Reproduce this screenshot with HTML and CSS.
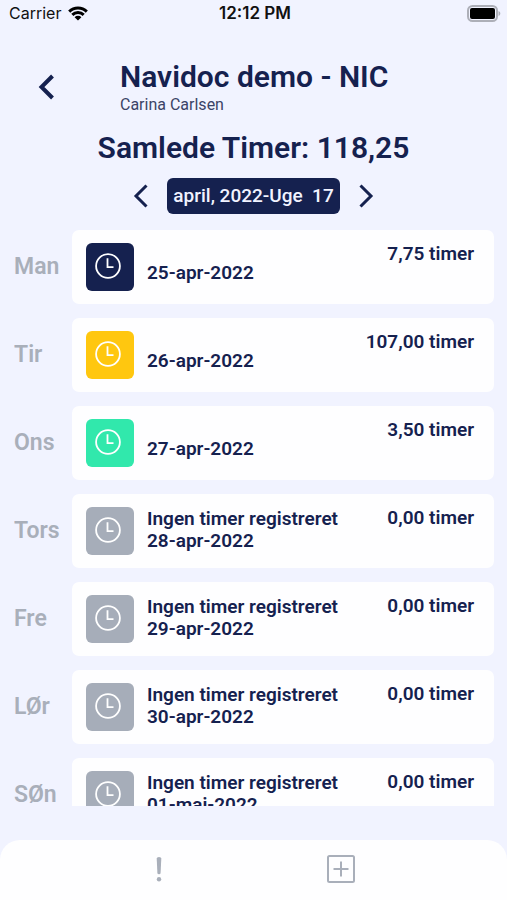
FILE: index.html
```html
<!DOCTYPE html>
<html lang="da">
<head>
<meta charset="utf-8">
<meta name="viewport" content="width=device-width, initial-scale=1">
<title>Navidoc demo - NIC</title>
<link rel="stylesheet" href="styles.css">
</head>
<body>
<svg class="sprite" aria-hidden="true">
  <symbol id="clock" viewBox="0 0 26 26">
    <circle cx="13" cy="13" r="11.9"/>
    <path d="M12.500 5.200V14.200h6"/>
  </symbol>
</svg>

<div class="status">
  <div class="carrier">
    <span>Carrier</span>
    <svg class="wifi" viewBox="0 0 20 15" aria-hidden="true">
      <path d="M1.2 5.6a12.6 12.6 0 0 1 17.6 0M4.3 8.9a8.2 8.2 0 0 1 11.4 0"/>
      <path class="solid" d="M10 14.6 6.6 11.2a4.8 4.8 0 0 1 6.8 0z"/>
    </svg>
  </div>
  <time class="clock-time">12:12 PM</time>
  <div class="power">
    <svg class="battery" viewBox="0 0 34 17" aria-hidden="true">
      <rect class="shell" x="1" y="1" width="29" height="15" rx="4.5"/>
      <rect class="charge" x="3" y="3" width="25" height="11" rx="2"/>
      <path class="tip" d="M31.5 6c2.400 1 2.400 4 0 5z"/>
    </svg>
  </div>
</div>

<header class="header">
  <button class="icon-button back" type="button" aria-label="Tilbage">
    <svg class="chevron-large" viewBox="0 0 16 26" aria-hidden="true"><path d="M13.500 2 2.500 13l11 11"/></svg>
  </button>
  <div>
    <h1 class="title">Navidoc demo - NIC</h1>
    <p class="user">Carina Carlsen</p>
  </div>
</header>

<h2 class="total">Samlede Timer: 118,25</h2>

<div class="week">
  <button class="icon-button" type="button" aria-label="Forrige uge">
    <svg class="chevron" viewBox="0 0 16 24" aria-hidden="true"><path d="M13.500 1.500 3 12l10.500 10.500"/></svg>
  </button>
  <button class="week-label" type="button">april, 2022-Uge&nbsp; 17</button>
  <button class="icon-button" type="button" aria-label="Næste uge">
    <svg class="chevron" viewBox="0 0 16 24" aria-hidden="true"><path d="M2.500 1.500 13 12 2.500 22.500"/></svg>
  </button>
</div>

<main class="days">
  <section class="day">
    <h3 class="weekday">Man</h3>
    <div class="card">
      <span class="badge navy"><svg><use href="#clock"/></svg></span>
      <div class="entry"><p class="note"></p><p>25-apr-2022</p></div>
      <p class="hours">7,75 timer</p>
    </div>
  </section>
  <section class="day">
    <h3 class="weekday">Tir</h3>
    <div class="card">
      <span class="badge yellow"><svg><use href="#clock"/></svg></span>
      <div class="entry"><p class="note"></p><p>26-apr-2022</p></div>
      <p class="hours">107,00 timer</p>
    </div>
  </section>
  <section class="day">
    <h3 class="weekday">Ons</h3>
    <div class="card">
      <span class="badge green"><svg><use href="#clock"/></svg></span>
      <div class="entry"><p class="note"></p><p>27-apr-2022</p></div>
      <p class="hours">3,50 timer</p>
    </div>
  </section>
  <section class="day">
    <h3 class="weekday">Tors</h3>
    <div class="card">
      <span class="badge"><svg><use href="#clock"/></svg></span>
      <div class="entry"><p class="note">Ingen timer registreret</p><p>28-apr-2022</p></div>
      <p class="hours">0,00 timer</p>
    </div>
  </section>
  <section class="day">
    <h3 class="weekday">Fre</h3>
    <div class="card">
      <span class="badge"><svg><use href="#clock"/></svg></span>
      <div class="entry"><p class="note">Ingen timer registreret</p><p>29-apr-2022</p></div>
      <p class="hours">0,00 timer</p>
    </div>
  </section>
  <section class="day">
    <h3 class="weekday">LØr</h3>
    <div class="card">
      <span class="badge"><svg><use href="#clock"/></svg></span>
      <div class="entry"><p class="note">Ingen timer registreret</p><p>30-apr-2022</p></div>
      <p class="hours">0,00 timer</p>
    </div>
  </section>
  <section class="day">
    <h3 class="weekday">SØn</h3>
    <div class="card">
      <span class="badge"><svg><use href="#clock"/></svg></span>
      <div class="entry"><p class="note">Ingen timer registreret</p><p>01-maj-2022</p></div>
      <p class="hours">0,00 timer</p>
    </div>
  </section>
</main>

<nav class="tabs">
  <button class="icon-button" type="button" aria-label="Advarsler">
    <svg class="tab-icon" viewBox="0 0 30 30" aria-hidden="true">
      <path class="solid" d="M12.700 4.500q0-1.500 2.300-1.500t2.300 1.500L16.600 19q-.1 1.200-1.600 1.200T13.400 19z"/>
      <circle class="solid" cx="15" cy="25.300" r="2.200"/>
    </svg>
  </button>
  <button class="icon-button" type="button" aria-label="Tilføj">
    <svg class="tab-icon" viewBox="0 0 30 30" aria-hidden="true">
      <rect x="2" y="2" width="26" height="26" rx="1.500"/>
      <path d="M15 7.500v15M7.500 15h15"/>
    </svg>
  </button>
</nav>
</body>
</html>
```

FILE: styles.css
```css
* {
  box-sizing: border-box;
}

body {
  display: flex;
  flex-direction: column;
  height: 100vh;
  margin: 0;
  overflow: hidden;
  background: #f1f3ff;
  color: #15214f;
  font-family: Roboto, "Liberation Sans", sans-serif;
}

h1, h2, h3, p {
  margin: 0;
}

button {
  padding: 0;
  border: 0;
  background: none;
  color: inherit;
  font: inherit;
}

svg {
  display: block;
  fill: none;
  stroke: currentColor;
}

.sprite {
  display: none;
}

.solid {
  fill: currentColor;
  stroke: none;
}

.icon-button {
  display: flex;
  align-items: center;
  justify-content: center;
}

.status {
  display: grid;
  grid-template-columns: 1fr auto 1fr;
  align-items: center;
  height: 26px;
  padding: 0 6px 0 9px;
  color: #111;
  font-family: Inter, Roboto, sans-serif;
  font-size: 16px;
}

.carrier {
  display: flex;
  align-items: center;
  gap: 7px;
}

.wifi {
  width: 20px;
  height: 15px;
  color: #000;
  stroke-width: 3;
}

.clock-time {
  font-size: 17px;
  font-weight: 600;
}

.power {
  display: flex;
  justify-content: flex-end;
}

.battery {
  width: 34px;
  height: 17px;
}

.shell {
  stroke: #adafb8;
  stroke-width: 2;
}

.charge {
  fill: #000;
  stroke: none;
}

.tip {
  fill: #adafb8;
  stroke: none;
}

.header {
  display: flex;
  align-items: center;
  gap: 64px;
  padding: 33px 14px 0 38px;
}

.chevron-large {
  width: 18px;
  height: 26px;
  stroke-width: 4;
}

.title {
  font-size: 30px;
  font-weight: 600;
  line-height: 36px;
}

.user {
  color: #3b4366;
  font-size: 16px;
  line-height: 20px;
}

.total {
  margin-top: 15px;
  font-size: 30px;
  font-weight: 600;
  line-height: 36px;
  text-align: center;
}

.week {
  display: flex;
  align-items: center;
  justify-content: center;
  gap: 18px;
  margin-top: 12px;
}

.chevron {
  width: 16px;
  height: 24px;
  stroke-width: 3;
}

.week-label {
  height: 36px;
  padding: 0 6px 1px;
  border-radius: 6px;
  background: #15214f;
  color: #f1f3ff;
  font-size: 19px;
  font-weight: 500;
}

.days {
  display: flex;
  flex: 1;
  flex-direction: column;
  gap: 14px;
  min-height: 0;
  margin: 16px 13px 34px 14px;
  overflow: hidden;
}

.day {
  display: grid;
  flex: none;
  grid-template-columns: 58px 1fr;
  align-items: center;
}

.weekday {
  padding-bottom: 2px;
  color: #a9afba;
  font-size: 23px;
  font-weight: 600;
}

.card {
  display: flex;
  align-items: center;
  gap: 13px;
  min-height: 74px;
  padding: 0 20px 0 14px;
  border-radius: 7px;
  background: #fefeff;
  font-size: 19px;
  font-weight: 600;
  line-height: 22px;
}

.badge {
  display: grid;
  flex: none;
  place-items: center;
  width: 48px;
  height: 48px;
  padding: 0 4px 2px 0;
  border-radius: 6px;
  background: #a6adb9;
  color: #fff;
}

.badge svg {
  width: 26px;
  height: 26px;
  stroke-width: 1.8;
}

.navy {
  background: #15214f;
}

.yellow {
  background: #ffc70f;
}

.green {
  background: #31e8ac;
}

.entry {
  flex: 1;
  padding-bottom: 2px;
}

.note {
  min-height: 14px;
}

.hours {
  align-self: flex-start;
  margin-top: 13px;
}

.tabs {
  display: flex;
  flex: none;
  justify-content: center;
  gap: 152px;
  height: 60px;
  padding: 0 7px 2px 0;
  border-radius: 20px 20px 0 0;
  background: #fefeff;
  color: #a9afba;
}

.tab-icon {
  width: 30px;
  height: 30px;
  stroke-width: 2;
}
```
